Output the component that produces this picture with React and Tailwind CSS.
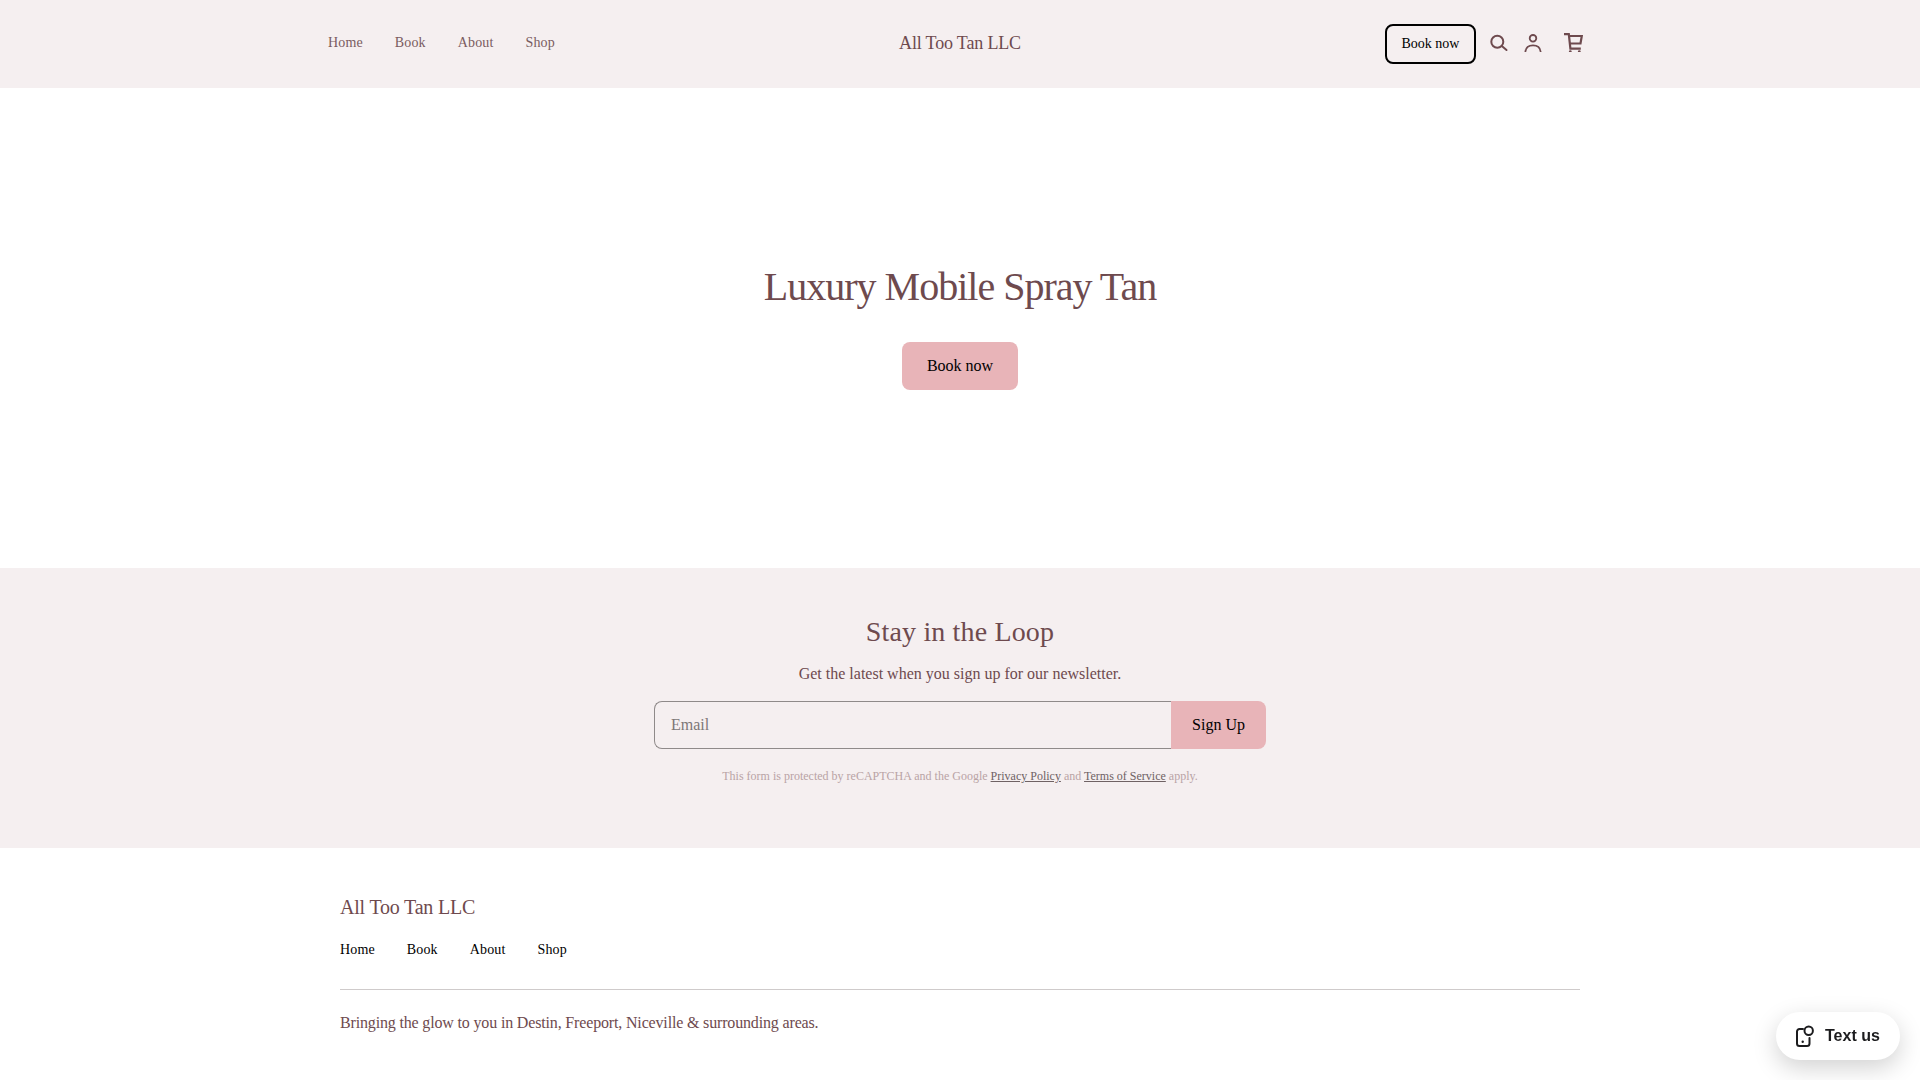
const navLinks = ['Home', 'Book', 'About', 'Shop'];

function SearchIcon() {
  return (
    <svg width="20" height="20" viewBox="0 0 20 20" fill="none" stroke="currentColor" strokeWidth="2" strokeLinecap="round">
      <circle cx="9.300" cy="9.700" r="6" />
      <path d="M13.800 14L18.500 18" />
    </svg>
  );
}

function UserIcon() {
  return (
    <svg width="20" height="20" viewBox="0 0 20 20" fill="none" stroke="currentColor" strokeWidth="1.800" strokeLinecap="round">
      <circle cx="10" cy="6.300" r="3.300" />
      <path d="M2.400 19.500C2.900 15.500 6 13.300 10 13.300C14 13.300 17.100 15.500 17.600 19.500" />
    </svg>
  );
}

function CartIcon() {
  return (
    <svg width="20" height="20" viewBox="0 0 20 20" fill="none" stroke="currentColor" strokeWidth="2.200">
      <path d="M1 2.200H5.800L7.400 16.600H17.800" />
      <path d="M6 4H18.800L17.500 11.500H7" />
      <circle cx="7.300" cy="19.600" r="1.400" fill="currentColor" stroke="none" />
      <circle cx="16.300" cy="19.600" r="1.400" fill="currentColor" stroke="none" />
    </svg>
  );
}

function Header() {
  return (
    <header className="h-[88px] bg-[#f5eff0] flex justify-center">
      <div className="w-[1280px] px-2 grid grid-cols-3 items-center">
        <nav className="flex items-center gap-8 text-sm tracking-[0.15px] text-[#7a5c60] pb-[3px]">
          {navLinks.map((link) => (
            <a key={link} href="#">{link}</a>
          ))}
        </nav>
        <div className="text-center text-lg tracking-[-0.17px] text-[#6e4a4e] pb-[2px]">All Too Tan LLC</div>
        <div className="flex items-center justify-end text-[#6e4a4e] pr-[9px]">
          <button className="h-10 w-[91px] rounded-lg border-2 border-black text-sm text-black">Book now</button>
          <div className="flex items-center mb-1 ml-3">
            <SearchIcon />
            <div className="ml-[15px]"><UserIcon /></div>
            <div className="ml-[20px]"><CartIcon /></div>
          </div>
        </div>
      </div>
    </header>
  );
}

function Hero() {
  return (
    <section className="h-[480px] bg-white flex flex-col items-center pt-[174px]">
      <h1 className="text-[40px] leading-[50px] tracking-[-1px] text-[#6e4a4e]">Luxury Mobile Spray Tan</h1>
      <button className="mt-[30px] h-12 w-[116px] rounded-lg bg-[#e8b4b8] text-base text-black">Book now</button>
    </section>
  );
}

function Newsletter() {
  return (
    <section className="h-[280px] bg-[#f5eff0] flex flex-col items-center pt-[46px]">
      <h2 className="text-[28px] tracking-[0.15px] leading-[36px] text-[#6e4a4e]">Stay in the Loop</h2>
      <p className="mt-[12px] text-base leading-6 text-[#6e4a4e]">Get the latest when you sign up for our newsletter.</p>
      <form className="mt-[15px] w-[612px] h-12 flex">
        <input
          placeholder="Email"
          className="flex-1 min-w-0 px-4 rounded-l-lg border border-r-0 border-[#8f8a8a] text-base outline-none placeholder:text-[#7d7777]"
        />
        <button type="button" className="w-[95px] rounded-r-lg bg-[#e8b4b8] text-base text-black">Sign Up</button>
      </form>
      <p className="mt-[19px] text-xs leading-4 text-[#b9a3a5]">
        This form is protected by reCAPTCHA and the Google{' '}
        <a href="#" className="underline text-[#6f6264]">Privacy Policy</a> and{' '}
        <a href="#" className="underline text-[#6f6264]">Terms of Service</a> apply.
      </p>
    </section>
  );
}

function Footer() {
  return (
    <footer className="h-[232px] bg-white flex justify-center">
      <div className="w-[1240px] pt-[45px]">
        <div className="text-xl tracking-[-0.2px] leading-7 text-[#6e4a4e]">All Too Tan LLC</div>
        <nav className="mt-[19px] flex gap-8 text-sm tracking-[0.15px] leading-5 text-black">
          {navLinks.map((link) => (
            <a key={link} href="#">{link}</a>
          ))}
        </nav>
        <div className="mt-[29px] border-t border-[#cfcbcb]" />
        <p className="mt-[21px] text-base tracking-[-0.16px] leading-6 text-[#6e4a4e]">Bringing the glow to you in Destin, Freeport, Niceville &amp; surrounding areas.</p>
      </div>
    </footer>
  );
}

function TextUs() {
  return (
    <div className="fixed right-5 bottom-5 h-12 w-[124px] pl-[19px] rounded-full bg-white shadow-[0_8px_24px_rgba(0,0,0,0.18)] flex items-center gap-[10px] font-['Liberation_Sans',sans-serif] font-bold text-base text-[#1c1c1e]">
      <svg width="20" height="24" viewBox="0 0 20 24" fill="none" stroke="currentColor" strokeWidth="2" strokeLinecap="round">
        <circle cx="13.700" cy="6.700" r="4.200" />
        <path d="M8 5H4.500A2.500 2.500 0 0 0 2 7.500V19.500A2.500 2.500 0 0 0 4.500 22H12A2.500 2.500 0 0 0 14.500 19.500V14" />
        <circle cx="7.700" cy="17.700" r="1.200" fill="currentColor" stroke="none" />
      </svg>
      Text us
    </div>
  );
}

export default function App() {
  return (
    <div className="min-h-screen font-['Liberation_Serif',serif]">
      <Header />
      <Hero />
      <Newsletter />
      <Footer />
      <TextUs />
    </div>
  );
}
